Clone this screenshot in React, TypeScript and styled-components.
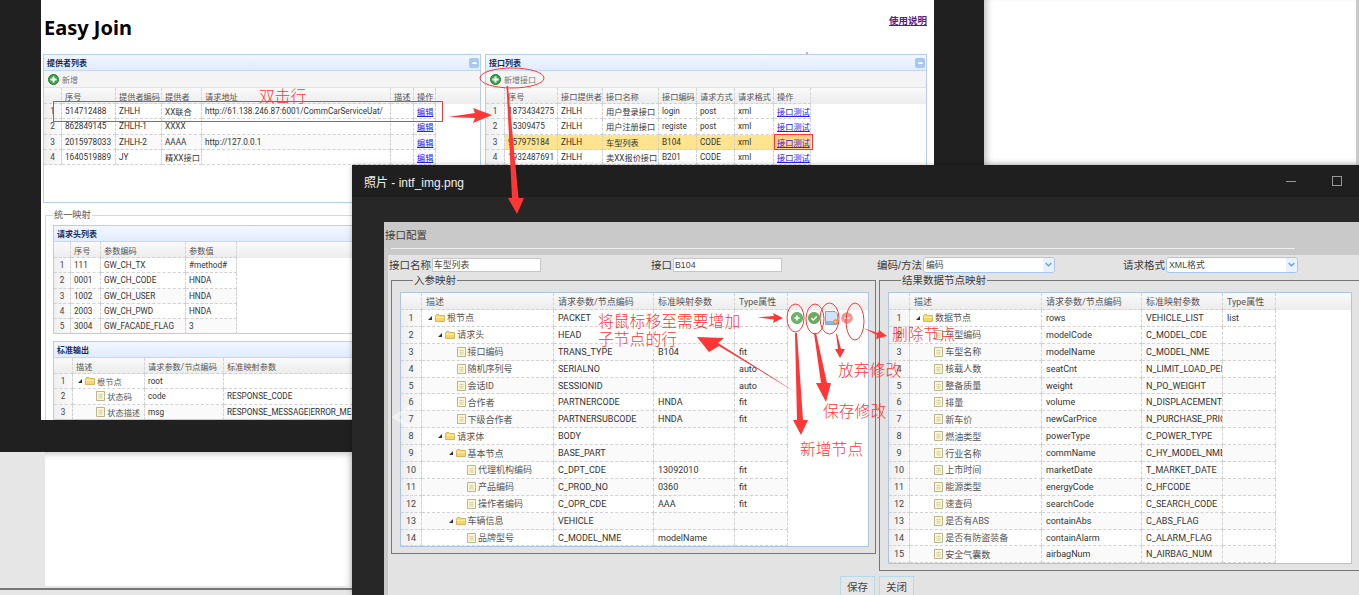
import React from 'react'
import styled, { createGlobalStyle } from 'styled-components'

const FONT = `"Liberation Sans", "Noto Sans CJK SC", sans-serif`
const GRID_FONT = `Roboto, "Noto Sans CJK SC", sans-serif`
const RED = '#ff3636'

const GlobalStyle = createGlobalStyle`
  html, body {
    margin: 0;
    width: 1359px;
    height: 595px;
    overflow: hidden;
    background: #202020;
  }
  * { box-sizing: border-box; }
`

const Desktop = styled.div`
  position: relative;
  width: 1359px;
  height: 595px;
  overflow: hidden;
  background: #202020;
  font-family: ${FONT};
`

/* windows behind the two main ones */
const BackRight = styled.div`
  position: absolute;
  left: 984px;
  top: 0;
  width: 375px;
  height: 165px;
  background: #fff;
  border-right: 3px solid #c9c9c9;
  box-shadow: inset 7px 0 6px -4px #c4c4c4, inset 0 -6px 6px -4px #ddd;
`

const BackLeft = styled.div`
  position: absolute;
  left: 0;
  top: 452px;
  width: 352px;
  height: 143px;
  background: #e6e6e6;
  padding-left: 45px;
`

const BackLeftPage = styled.div`
  height: 134px;
  background: #fff;
  box-shadow: inset 0 7px 6px -5px #c8c8c8, inset -8px 0 8px -6px #ddd;
`

const BackLeftLine = styled.div`
  position: absolute;
  left: 0;
  right: 0;
  top: 136px;
  height: 2px;
  background: #777;
`

/* ---------- easy join window ---------- */
const MainWindow = styled.div`
  position: absolute;
  left: 41px;
  top: 0;
  width: 893px;
  height: 420px;
  background: #fff;
  overflow: hidden;
`

const TitleRow = styled.div`
  display: flex;
  justify-content: space-between;
  height: 54px;
  padding: 15px 7px 0 3px;
`

const AppTitle = styled.h1`
  margin: 0;
  font-family: "Noto Sans", sans-serif;
  font-size: 20px;
  line-height: 26px;
  font-weight: 700;
  color: #000;
`

const HelpLink = styled.a`
  font-size: 9.5px;
  line-height: 12px;
  font-weight: 700;
  color: #551a8b;
  text-decoration: underline;
`

const PanelRow = styled.div`
  display: flex;
  gap: 4px;
  padding-left: 2px;
`

const PanelBox = styled.div<{ $w: number; $h: number }>`
  flex: none;
  width: ${(p) => p.$w}px;
  height: ${(p) => p.$h}px;
  border: 1px solid #b4cdf0;
  background: #fff;
  overflow: hidden;
`

const PanelHead = styled.div`
  display: flex;
  align-items: center;
  justify-content: space-between;
  height: 16px;
  padding: 0 1px 0 3px;
  background: linear-gradient(180deg, #f2f7ff, #e0ecff);
  border-bottom: 1px solid #c4d8f5;
  font-size: 8px;
  font-weight: 700;
  color: #0e2d5f;
`

const CollapseBtn = styled.span`
  width: 10px;
  height: 10px;
  border-radius: 2px;
  background: #a9c8f0;
  display: flex;
  align-items: center;
  justify-content: center;
  &::after {
    content: '';
    width: 5px;
    height: 2px;
    border-radius: 2px 2px 0 0;
    background: #fff;
  }
`

const Toolbar = styled.div`
  display: flex;
  align-items: center;
  gap: 3px;
  height: 17px;
  padding-left: 4px;
  background: #f4f4f4;
  border-bottom: 1px solid #e2e2e2;
  font-size: 8px;
  color: #777;
`

const MapFieldset = styled.fieldset`
  margin: 7px 0 0 4px;
  padding: 4px 0 0 7px;
  width: 888px;
  min-width: 0;
  border: 1px solid #c7dcea;
  border-right: 0;
  display: flex;
  flex-direction: column;
  gap: 7px;
`

const MapLegend = styled.legend`
  margin-left: 0;
  padding: 0 1px;
  font-size: 9.2px;
  line-height: 11px;
  color: #555;
`

/* ---------- data grid ---------- */
const GridBox = styled.div<{ $font: number; $boxed?: boolean }>`
  font-family: ${GRID_FONT};
  font-size: ${(p) => p.$font}px;
  color: #333;
  background: #fff;
  ${(p) => p.$boxed && 'border: 1px solid #aec4e4; overflow: hidden;'}
`

const HeadRow = styled.div<{ $h: number }>`
  display: flex;
  height: ${(p) => p.$h}px;
  background: linear-gradient(180deg, #fafafa, #ececec);
  color: #555;
`

const BodyRow = styled.div<{ $h: number; $hl?: boolean }>`
  display: flex;
  width: max-content;
  height: ${(p) => p.$h}px;
  background: ${(p) => (p.$hl ? '#ffe48d' : 'transparent')};
  &:nth-child(odd) {
    background: ${(p) => (p.$hl ? '#ffe48d' : '#fafafa')};
  }
  &:first-child {
    background: transparent;
  }
`

const Cell = styled.div<{ $w: number; $pad: number }>`
  flex: none;
  display: flex;
  align-items: center;
  width: ${(p) => p.$w}px;
  padding: 0 ${(p) => p.$pad}px;
  border-right: 1px dashed #d2d2d2;
  border-bottom: 1px dashed #d2d2d2;
  white-space: nowrap;
  overflow: hidden;
`

const NumCell = styled.div<{ $w: number; $head?: boolean }>`
  flex: none;
  display: flex;
  align-items: center;
  justify-content: center;
  width: ${(p) => p.$w}px;
  color: #444;
  background: ${(p) => (p.$head ? 'transparent' : 'linear-gradient(90deg, #efefef, #fafafa)')};
  border-right: 1px dashed #d2d2d2;
  border-bottom: 1px dashed #d2d2d2;
`

const GridLink = styled.a`
  color: #2222ee;
  text-decoration: underline;
`

const TreeLine = styled.span<{ $level: number }>`
  display: flex;
  align-items: center;
  padding-left: ${(p) => 2 + p.$level * 10.3}px;
  color: #555;
`

const TreeArrow = styled.span`
  flex: none;
  width: 0;
  height: 0;
  margin-right: 3px;
  border-left: 4px solid transparent;
  border-bottom: 4px solid #333;
`

const TreeIcon = styled.svg<{ $leaf?: boolean }>`
  flex: none;
  width: ${(p) => (p.$leaf ? 9 : 10)}px;
  height: 10px;
  margin: 0 ${(p) => (p.$leaf ? '2px 0 8px' : '2px 0 0')};
`

const ActionIcons = styled.div`
  display: flex;
  align-items: center;
  gap: 5px;
  padding-left: 3px;
`

const RoundIcon = styled.svg<{ $faded?: boolean }>`
  width: 12px;
  height: 12px;
  ${(p) => p.$faded && 'opacity: 0.6; margin-left: -3px;'}
`

const DocIcon = styled.svg`
  width: 14px;
  height: 14px;
`

const Folder = () => (
  <TreeIcon viewBox="0 0 10 10">
    <path d="M.5 2.5 1.5 1.5H4L5 2.5H9.5V8.5H.5Z" fill="#f6d766" stroke="#c9a84f" strokeWidth=".8" />
    <path d="M.8 4.2H9.2" stroke="#fff3b8" strokeWidth="1" />
  </TreeIcon>
)

const Leaf = () => (
  <TreeIcon $leaf viewBox="0 0 9 10">
    <path d="M.5.5H8.5V9.5H.5Z" fill="#fdf8d2" stroke="#a8a578" strokeWidth=".8" />
    <path d="M2.4 3.4H6.6M2.4 5.2H6.6M2.4 7H6.6" stroke="#b4b18c" strokeWidth=".6" />
  </TreeIcon>
)

type TreeProps = { level: number; text: string; leaf?: boolean }

const Tree = ({ level, text, leaf }: TreeProps) => (
  <TreeLine $level={level}>
    {leaf ? <Leaf /> : <TreeArrow />}
    {!leaf && <Folder />}
    {text}
  </TreeLine>
)

type Row = { cells: React.ReactNode[]; hl?: boolean; actions?: React.ReactNode }

type GridProps = {
  numW: number
  widths: number[]
  titles: string[]
  rows: Row[]
  font: number
  headH: number
  rowH: number
  pad: number
  boxed?: boolean
}

const DataGrid = ({ numW, widths, titles, rows, font, headH, rowH, pad, boxed }: GridProps) => (
  <GridBox $font={font} $boxed={boxed}>
    <HeadRow $h={headH}>
      <NumCell $w={numW} $head />
      {titles.map((t, i) => (
        <Cell key={i} $w={widths[i]} $pad={pad}>
          {t}
        </Cell>
      ))}
    </HeadRow>
    <div>
      {rows.map((r, i) => (
        <BodyRow key={i} $h={rowH} $hl={r.hl}>
          <NumCell $w={numW}>{i + 1}</NumCell>
          {r.cells.map((c, j) => (
            <Cell key={j} $w={widths[j]} $pad={pad}>
              {c}
            </Cell>
          ))}
          {r.actions}
        </BodyRow>
      ))}
    </div>
  </GridBox>
)

const AddIcon = () => (
  <svg width="11" height="11" viewBox="0 0 11 11">
    <circle cx="5.5" cy="5.5" r="5" fill="#3aa648" stroke="#1f7a2c" />
    <path d="M5.5 2.4V8.6M2.4 5.5H8.6" stroke="#fff" strokeWidth="2" />
  </svg>
)

const Panel = ({
  title,
  w,
  h,
  tool,
  collapse,
  children,
}: {
  title: string
  w: number
  h: number
  tool?: string
  collapse?: boolean
  children: React.ReactNode
}) => (
  <PanelBox $w={w} $h={h}>
    <PanelHead>
      {title}
      {collapse && <CollapseBtn />}
    </PanelHead>
    {tool && (
      <Toolbar>
        <AddIcon />
        {tool}
      </Toolbar>
    )}
    {children}
  </PanelBox>
)

const edit = <GridLink>编辑</GridLink>
const test = <GridLink>接口测试</GridLink>
const mainGrid = { font: 8.2, headH: 16, rowH: 15.3, pad: 3 }

const providerRows: Row[] = [
  { cells: ['514712488', 'ZHLH', 'XX联合', 'http://61.138.246.87:6001/CommCarServiceUat/', '', edit] },
  { cells: ['862849145', 'ZHLH-1', 'XXXX', '', '', edit] },
  { cells: ['2015978033', 'ZHLH-2', 'AAAA', 'http://127.0.0.1', '', edit] },
  { cells: ['1640519889', 'JY', '精XX接口', '', '', edit] },
]

const apiRows: Row[] = [
  { cells: ['1873434275', 'ZHLH', '用户登录接口', 'login', 'post', 'xml', test] },
  { cells: ['15309475', 'ZHLH', '用户注册接口', 'registe', 'post', 'xml', test] },
  { cells: ['957975184', 'ZHLH', '车型列表', 'B104', 'CODE', 'xml', test], hl: true },
  { cells: ['1932487691', 'ZHLH', '卖XX报价接口', 'B201', 'CODE', 'xml', test] },
]

const headerRows: Row[] = [
  { cells: ['111', 'GW_CH_TX', '#method#'] },
  { cells: ['0001', 'GW_CH_CODE', 'HNDA'] },
  { cells: ['1002', 'GW_CH_USER', 'HNDA'] },
  { cells: ['2003', 'GW_CH_PWD', 'HNDA'] },
  { cells: ['3004', 'GW_FACADE_FLAG', '3'] },
]

const outputRows: Row[] = [
  { cells: [<Tree level={0} text="根节点" />, 'root', ''] },
  { cells: [<Tree level={1} leaf text="状态码" />, 'code', 'RESPONSE_CODE'] },
  { cells: [<Tree level={1} leaf text="状态描述" />, 'msg', 'RESPONSE_MESSAGE|ERROR_MESSAGE'] },
]

const RowActions = () => (
  <ActionIcons>
    <RoundIcon viewBox="0 0 12 12">
      <circle cx="6" cy="6" r="5.6" fill="#6cb468" stroke="#4f9a4c" strokeWidth=".7" />
      <path d="M6 3.4V8.6M3.4 6H8.6" stroke="#fff" strokeWidth="1.6" />
    </RoundIcon>
    <RoundIcon viewBox="0 0 12 12">
      <circle cx="6" cy="6" r="5.6" fill="#69ad5f" stroke="#4d9645" strokeWidth=".7" />
      <path d="M3.4 6.2 5.2 8 8.7 4.4" fill="none" stroke="#fff" strokeWidth="1.5" />
    </RoundIcon>
    <DocIcon viewBox="0 0 14 14">
      <path d="M.5.5H10L12.5 3V13.5H.5Z" fill="#cfe2f8" stroke="#7ea6d6" />
      <path d="M1 10H12V13H1Z" fill="#8fb6e6" />
      <circle cx="10.8" cy="10.8" r="2.6" fill="#ee8a3c" />
      <path d="M9.3 10.8H12.3" stroke="#fff" />
    </DocIcon>
    <RoundIcon $faded viewBox="0 0 12 12">
      <circle cx="6" cy="6" r="5.8" fill="#e2564e" />
      <path d="M3.4 6H8.6" stroke="#fff" strokeWidth="1.6" />
    </RoundIcon>
  </ActionIcons>
)

const inputRows: Row[] = [
  { cells: [<Tree level={0} text="根节点" />, 'PACKET', '', ''], actions: <RowActions /> },
  { cells: [<Tree level={1} text="请求头" />, 'HEAD', '', ''] },
  { cells: [<Tree level={2} leaf text="接口编码" />, 'TRANS_TYPE', 'B104', 'fit'] },
  { cells: [<Tree level={2} leaf text="随机序列号" />, 'SERIALNO', '', 'auto'] },
  { cells: [<Tree level={2} leaf text="会话ID" />, 'SESSIONID', '', 'auto'] },
  { cells: [<Tree level={2} leaf text="合作者" />, 'PARTNERCODE', 'HNDA', 'fit'] },
  { cells: [<Tree level={2} leaf text="下级合作者" />, 'PARTNERSUBCODE', 'HNDA', 'fit'] },
  { cells: [<Tree level={1} text="请求体" />, 'BODY', '', ''] },
  { cells: [<Tree level={2} text="基本节点" />, 'BASE_PART', '', ''] },
  { cells: [<Tree level={3} leaf text="代理机构编码" />, 'C_DPT_CDE', '13092010', 'fit'] },
  { cells: [<Tree level={3} leaf text="产品编码" />, 'C_PROD_NO', '0360', 'fit'] },
  { cells: [<Tree level={3} leaf text="操作者编码" />, 'C_OPR_CDE', 'AAA', 'fit'] },
  { cells: [<Tree level={2} text="车辆信息" />, 'VEHICLE', '', ''] },
  { cells: [<Tree level={3} leaf text="品牌型号" />, 'C_MODEL_NME', 'modelName', ''] },
]

const resultLeaves: [string, string, string][] = [
  ['车型编码', 'modelCode', 'C_MODEL_CDE'],
  ['车型名称', 'modelName', 'C_MODEL_NME'],
  ['核载人数', 'seatCnt', 'N_LIMIT_LOAD_PERSON'],
  ['整备质量', 'weight', 'N_PO_WEIGHT'],
  ['排量', 'volume', 'N_DISPLACEMENT'],
  ['新车价', 'newCarPrice', 'N_PURCHASE_PRICE'],
  ['燃油类型', 'powerType', 'C_POWER_TYPE'],
  ['行业名称', 'commName', 'C_HY_MODEL_NME'],
  ['上市时间', 'marketDate', 'T_MARKET_DATE'],
  ['能源类型', 'energyCode', 'C_HFCODE'],
  ['速查码', 'searchCode', 'C_SEARCH_CODE'],
  ['是否有ABS', 'containAbs', 'C_ABS_FLAG'],
  ['是否有防盗装备', 'containAlarm', 'C_ALARM_FLAG'],
  ['安全气囊数', 'airbagNum', 'N_AIRBAG_NUM'],
]

const resultRows: Row[] = [
  { cells: [<Tree level={0} text="数据节点" />, 'rows', 'VEHICLE_LIST', 'list'] },
  ...resultLeaves.map(([a, b, c]) => ({ cells: [<Tree level={1} leaf text={a} />, b, c, ''] })),
]

const modalGrid = {
  numW: 21,
  widths: [132, 100, 81, 53],
  titles: ['描述', '请求参数/节点编码', '标准映射参数', 'Type属性'],
  font: 9,
  headH: 17,
  rowH: 16.9,
  pad: 4,
}

/* ---------- photo viewer window ---------- */
const Viewer = styled.div`
  position: absolute;
  left: 352px;
  top: 165px;
  right: 0;
  bottom: 0;
  display: flex;
  flex-direction: column;
  background: #272727;
  box-shadow: 0 0 5px rgba(0, 0, 0, 0.25);
`

const ViewerBar = styled.div`
  flex: none;
  display: flex;
  align-items: center;
  justify-content: space-between;
  height: 32px;
  padding: 0 17px 0 12px;
  background: #1f1f1f;
  color: #f0f0f0;
  font-size: 12px;
`

const WinControls = styled.div`
  display: flex;
  align-items: center;
  gap: 36px;
`

const WinMinimize = styled.span`
  width: 10px;
  height: 1px;
  background: #999;
`

const WinMaximize = styled.span`
  width: 10px;
  height: 10px;
  border: 1px solid #999;
`

const Modal = styled.div`
  flex: 1;
  margin: 25px 0 0 32px;
  min-height: 0;
  overflow: hidden;
  background: #e3e3e3;
`

const ModalHead = styled.div`
  height: 33px;
  padding: 6px 0 0 1px;
  background: #c9c9c9;
  font-size: 10.5px;
  line-height: 14px;
  color: #3c3c3c;
`

const ModalRule = styled.div`
  width: 904px;
  height: 1px;
  margin: 6px 0 0 6px;
  background: #efefef;
`

const ModalBody = styled.div`
  border-left: 4px solid #c9c9c9;
  height: 340px;
  width: 1000px;
`

const FormRow = styled.div`
  display: grid;
  grid-template-columns: 262px 226px 246px auto;
  align-items: center;
  height: 19px;
  padding: 1px 0 1px 1px;
`

const FormField = styled.label`
  display: flex;
  align-items: center;
  gap: 1px;
  font-size: 10.5px;
  color: #3c3c3c;
`

const TextInput = styled.input<{ $w: number }>`
  width: ${(p) => p.$w}px;
  height: 14px;
  padding: 0 1px;
  border: 1px solid #c6c6c6;
  background: #fff;
  font: 8.8px ${FONT};
  color: #444;
  outline: 0;
`

const Combo = styled.div`
  display: flex;
  align-items: center;
  justify-content: space-between;
  width: 132px;
  height: 16px;
  padding-left: 2px;
  border: 1px solid #a9c6ee;
  border-radius: 3px;
  background: #fff;
  font-size: 8.8px;
  color: #444;
  overflow: hidden;
`

const ComboBtn = styled.span`
  display: flex;
  align-items: center;
  justify-content: center;
  width: 11px;
  height: 100%;
  background: #e8f1fc;
`

const FieldsetRow = styled.div`
  display: flex;
  align-items: flex-start;
  gap: 3px;
  padding-left: 3px;
`

const MapGroup = styled.fieldset<{ $w: number }>`
  flex: none;
  width: ${(p) => p.$w}px;
  min-width: 0;
  margin: 0;
  padding: 5px 6px 6px 8px;
  border: 1px solid #777;
`

const GroupLegend = styled.legend`
  margin-left: 13px;
  padding: 0 1px;
  font-size: 10.5px;
  line-height: 13px;
  color: #3c3c3c;
`

const ResultGrid = styled.div`
  width: 464px;
`

const ModalFoot = styled.div`
  display: flex;
  gap: 4px;
  margin-top: 5px;
  padding-left: 452px;
`

const FootButton = styled.button`
  width: 35px;
  height: 20px;
  padding: 0;
  border: 1px solid #b6dbe6;
  background: #e6e6e6;
  font: 10.5px ${FONT};
  color: #444;
`

/* ---------- red notes drawn over the screenshot ---------- */
const Overlay = styled.svg`
  position: absolute;
  left: 0;
  top: 0;
  width: 1359px;
  height: 595px;
  pointer-events: none;
`

const Note = styled.span<{ $x: number; $y: number; $w?: number }>`
  position: absolute;
  left: ${(p) => p.$x}px;
  top: ${(p) => p.$y}px;
  ${(p) => p.$w && `width: ${p.$w}px;`}
  font-size: 15.8px;
  font-weight: 300;
  line-height: 18px;
  color: ${RED};
`

const RingOutline = styled.ellipse`
  fill: none;
  stroke: ${RED};
  stroke-width: 1;
`

const arrows = [
  '448,117 475,113 473,108 492,115 473,123 475,118',
  '506.5,86 508,86 518.5,198 524,198 517,214 508,198 512,198',
  '757,317.5 774,316 773,313 783,318 773,323 774,319.5',
  '795,333 797,333 803,420 808,420 801,435 793,420 797,420',
  '814,333 816,333 827,383 831,383 826,402 816,383 821,383',
  '836,334 837,334 841,349 845,349 840,358 835,349 838,349',
  '863,328 878,333 879,330 887,336 876,339 877,335',
  '797,393 719,346 709,352 697,337 724,338 718,343',
]

const rings: [number, number, number, number][] = [
  [512, 78, 32, 10],
  [795.5, 318, 8.5, 14],
  [815, 319, 9, 15],
  [829.5, 318.5, 9.5, 15.5],
  [855, 321.5, 9, 18.5],
]

const App = () => (
  <Desktop>
    <GlobalStyle />
    <BackRight />
    <BackLeft>
      <BackLeftPage />
      <BackLeftLine />
    </BackLeft>

    <MainWindow>
      <TitleRow>
        <AppTitle>Easy Join</AppTitle>
        <HelpLink>使用说明</HelpLink>
      </TitleRow>
      <PanelRow>
        <Panel title="提供者列表" w={438} h={149} tool="新增" collapse>
          <DataGrid
            {...mainGrid}
            numW={18}
            widths={[54, 46, 40, 189, 23, 22]}
            titles={['序号', '提供者编码', '提供者', '请求地址', '描述', '操作']}
            rows={providerRows}
          />
        </Panel>
        <Panel title="接口列表" w={442} h={149} tool="新增接口" collapse>
          <DataGrid
            {...mainGrid}
            numW={19}
            widths={[53, 45, 56, 38, 38, 39, 37]}
            titles={['序号', '接口提供者', '接口名称', '接口编码', '请求方式', '请求格式', '操作']}
            rows={apiRows}
          />
        </Panel>
      </PanelRow>
      <MapFieldset>
        <MapLegend>统一映射</MapLegend>
        <Panel title="请求头列表" w={873} h={109}>
          <DataGrid
            {...mainGrid}
            numW={17}
            widths={[30, 85, 51]}
            titles={['序号', '参数编码', '参数值']}
            rows={headerRows}
          />
        </Panel>
        <Panel title="标准输出" w={873} h={79}>
          <DataGrid
            {...mainGrid}
            numW={19}
            widths={[72, 79, 300]}
            titles={['描述', '请求参数/节点编码', '标准映射参数']}
            rows={outputRows}
          />
        </Panel>
      </MapFieldset>
    </MainWindow>

    <Viewer>
      <ViewerBar>
        照片 - intf_img.png
        <WinControls>
          <WinMinimize />
          <WinMaximize />
        </WinControls>
      </ViewerBar>
      <Modal>
        <ModalHead>
          接口配置
          <ModalRule />
        </ModalHead>
        <ModalBody>
          <FormRow>
            <FormField>
              接口名称
              <TextInput $w={109} readOnly value="车型列表" />
            </FormField>
            <FormField>
              接口
              <TextInput $w={109} readOnly value="B104" />
            </FormField>
            <FormField>
              编码/方法
              <Combo>
                编码
                <ComboBtn>
                  <svg width="7" height="5" viewBox="0 0 7 5">
                    <path d="M.7 1 3.5 3.8 6.3 1" fill="none" stroke="#6e9bd6" strokeWidth="1.3" />
                  </svg>
                </ComboBtn>
              </Combo>
            </FormField>
            <FormField>
              请求格式
              <Combo>
                XML格式
                <ComboBtn>
                  <svg width="7" height="5" viewBox="0 0 7 5">
                    <path d="M.7 1 3.5 3.8 6.3 1" fill="none" stroke="#6e9bd6" strokeWidth="1.3" />
                  </svg>
                </ComboBtn>
              </Combo>
            </FormField>
          </FormRow>
          <FieldsetRow>
            <MapGroup $w={485}>
              <GroupLegend>入参映射</GroupLegend>
              <DataGrid {...modalGrid} rows={inputRows} boxed />
            </MapGroup>
            <MapGroup $w={500}>
              <GroupLegend>结果数据节点映射</GroupLegend>
              <ResultGrid>
                <DataGrid {...modalGrid} rows={resultRows} boxed />
              </ResultGrid>
            </MapGroup>
          </FieldsetRow>
          <ModalFoot>
            <FootButton>保存</FootButton>
            <FootButton>关闭</FootButton>
          </ModalFoot>
        </ModalBody>
      </Modal>
    </Viewer>

    <Overlay viewBox="0 0 1359 595">
      <polyline points="410,407 395,417 410,427" fill="none" stroke="#fff" strokeOpacity=".45" strokeWidth="4" />
      <rect x="53.5" y="101.5" width="389" height="20" fill="none" stroke={RED} />
      <rect x="774.5" y="134.5" width="38" height="15" fill="#ff3636" fillOpacity=".1" stroke={RED} />
      <path d="M807 52V54" stroke={RED} />
      {rings.map(([cx, cy, rx, ry]) => (
        <RingOutline key={cx} cx={cx} cy={cy} rx={rx} ry={ry} />
      ))}
      {arrows.map((a) => (
        <polygon key={a} points={a} fill={RED} />
      ))}
    </Overlay>
    <Note $x={259} $y={88}>双击行</Note>
    <Note $x={598} $y={313} $w={144}>将鼠标移至需要增加子节点的行</Note>
    <Note $x={892} $y={326}>删除节点</Note>
    <Note $x={838} $y={362}>放弃修改</Note>
    <Note $x={823} $y={403}>保存修改</Note>
    <Note $x={800} $y={441}>新增节点</Note>
  </Desktop>
)

export default App
